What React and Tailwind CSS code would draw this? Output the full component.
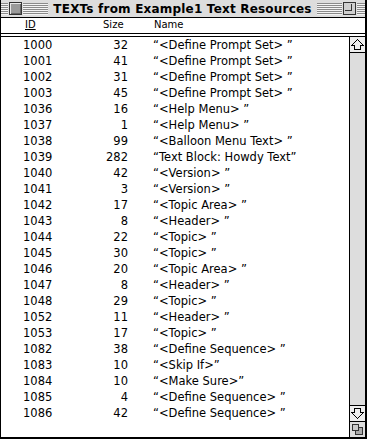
import React from "react";

const rows = [
  ["1000", "32", "“<Define Prompt Set> ”"],
  ["1001", "41", "“<Define Prompt Set> ”"],
  ["1002", "31", "“<Define Prompt Set> ”"],
  ["1003", "45", "“<Define Prompt Set> ”"],
  ["1036", "16", "“<Help Menu> ”"],
  ["1037", "1", "“<Help Menu> ”"],
  ["1038", "99", "“<Balloon Menu Text> ”"],
  ["1039", "282", "“Text Block: Howdy Text”"],
  ["1040", "42", "“<Version> ”"],
  ["1041", "3", "“<Version> ”"],
  ["1042", "17", "“<Topic Area> ”"],
  ["1043", "8", "“<Header> ”"],
  ["1044", "22", "“<Topic> ”"],
  ["1045", "30", "“<Topic> ”"],
  ["1046", "20", "“<Topic Area> ”"],
  ["1047", "8", "“<Header> ”"],
  ["1048", "29", "“<Topic> ”"],
  ["1052", "11", "“<Header> ”"],
  ["1053", "17", "“<Topic> ”"],
  ["1082", "38", "“<Define Sequence> ”"],
  ["1083", "10", "“<Skip If>”"],
  ["1084", "10", "“<Make Sure>”"],
  ["1085", "4", "“<Define Sequence> ”"],
  ["1086", "42", "“<Define Sequence> ”"],
];

const stripes =
  "h-[12px] bg-[repeating-linear-gradient(to_bottom,#8a8a8a_0px,#8a8a8a_1px,#f4f4f4_1px,#f4f4f4_2px)]";

function ArrowUp() {
  return (
    <svg width="15" height="15" viewBox="0 0 15 15">
      <polygon
        points="7.5,2.5 13.5,8.5 10.5,8.5 10.5,12.5 4.5,12.5 4.5,8.5 1.5,8.5"
        fill="none"
        stroke="#000"
        strokeWidth="1"
        shapeRendering="crispEdges"
      />
    </svg>
  );
}

function ArrowDown() {
  return (
    <svg width="15" height="15" viewBox="0 0 15 15">
      <polygon
        points="7.5,12.5 13.5,6.5 10.5,6.5 10.5,2.5 4.5,2.5 4.5,6.5 1.5,6.5"
        fill="none"
        stroke="#000"
        strokeWidth="1"
        shapeRendering="crispEdges"
      />
    </svg>
  );
}

function GrowBox() {
  return (
    <svg width="15" height="15" viewBox="0 0 15 15" shapeRendering="crispEdges">
      <rect x="5.5" y="5.5" width="7" height="7" fill="#aaa" stroke="#333" />
      <rect x="2.5" y="2.5" width="6" height="6" fill="#ccc" stroke="#333" />
    </svg>
  );
}

export default function App() {
  return (
    <div className="w-[367px] h-[439px] flex flex-col bg-white border-l border-black border-r-2 border-b-2 font-['DejaVu_Sans',sans-serif] text-black overflow-hidden">
      {/* title bar */}
      <div className="h-[18px] shrink-0 border-b border-black bg-[#dddddd] flex items-center">
        <div className={`w-[7px] ${stripes}`}></div>
        <div className="w-[13px] h-[13px] mx-[1px] border border-[#333] bg-[#9a9a9a] shadow-[inset_1px_1px_0_#e8e8e8,inset_-1px_-1px_0_#666]"></div>
        <div className={`flex-1 ${stripes}`}></div>
        <div className="px-[5px] text-[12px] font-bold leading-none tracking-[0.2px] whitespace-nowrap">
          TEXTs from Example1 Text Resources
        </div>
        <div className={`flex-1 ${stripes}`}></div>
        <div className="w-[13px] h-[13px] mx-[1px] border border-[#333] bg-[#cfcfcf] relative">
          <div className="absolute left-[1px] top-[1px] w-[7px] h-[7px] border-r border-b border-[#333]"></div>
        </div>
        <div className={`w-[8px] ${stripes}`}></div>
      </div>

      {/* header */}
      <div className="h-[16px] shrink-0 flex items-end text-[10px] leading-none pb-[3px] border-b border-black">
        <div className="w-[24px]"></div>
        <div className="w-[78px] underline underline-offset-[1px]">ID</div>
        <div className="w-[20px] text-right">Size</div>
        <div className="w-[31px]"></div>
        <div>Name</div>
      </div>
      <div className="h-[2px] shrink-0"></div>
      <div className="h-[1px] shrink-0 bg-black"></div>

      {/* content */}
      <div className="flex-1 flex min-h-0">
        <div className="flex-1 text-[11.5px] leading-[16px]">
          {rows.map(([id, size, name]) => (
            <div key={id} className="h-[16px] flex items-center whitespace-pre">
              <div className="w-[22px]"></div>
              <div className="w-[65px]">{id}</div>
              <div className="w-[40px] text-right">{size}</div>
              <div className="w-[25px]"></div>
              <div>{name}</div>
            </div>
          ))}
        </div>
        <div className="w-[16px] border-l border-black flex flex-col bg-[#dddddd]">
          <div className="h-[16px] border-b border-black bg-[#eeeeee] flex items-center justify-center">
            <ArrowUp />
          </div>
          <div className="flex-1"></div>
          <div className="h-[16px] border-t border-black bg-[#eeeeee] flex items-center justify-center">
            <ArrowDown />
          </div>
          <div className="h-[16px] border-t border-black bg-[#dddddd] flex items-center justify-center">
            <GrowBox />
          </div>
        </div>
      </div>
    </div>
  );
}
